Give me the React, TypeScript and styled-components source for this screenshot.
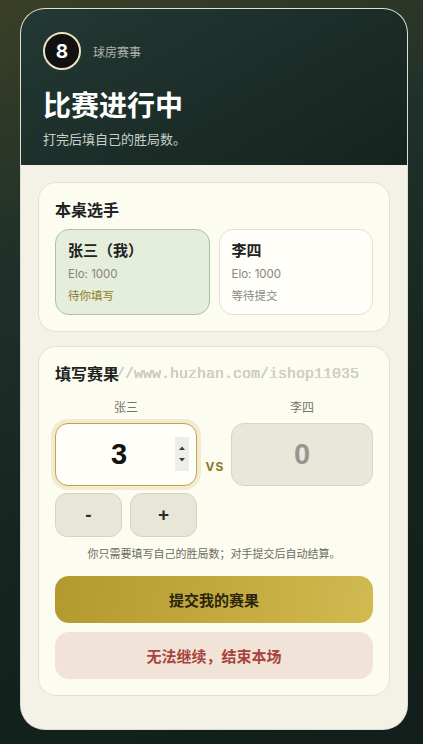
import { FC } from 'react';
import styled, { createGlobalStyle } from 'styled-components';

const GlobalStyle = createGlobalStyle`
    * { box-sizing: border-box; }
    html, body {
        margin: 0;
        padding: 0;
        min-height: 100%;
    }
    body {
        font-family: "Inter", "Noto Sans CJK SC", sans-serif;
        background: linear-gradient(160deg, #3b3f26 0%, #1f302a 30%, #16251f 60%, #111e1b 100%);
        min-height: 744px;
    }
`;

const players = [
    { name: '张三（我）', elo: 1000, status: '待你填写', mine: true },
    { name: '李四', elo: 1000, status: '等待提交', mine: false },
];

const App: FC = () => {
    return (
        <>
            <GlobalStyle />
            <Page>
                <Shell>
                    <Header>
                        <Brand>
                            <Badge>8</Badge>
                            <BrandName>球房赛事</BrandName>
                        </Brand>
                        <Title>比赛进行中</Title>
                        <Subtitle>打完后填自己的胜局数。</Subtitle>
                    </Header>

                    <Body>
                        <Section>
                            <SectionTitle>本桌选手</SectionTitle>
                            <PlayerGrid>
                                {players.map((p) => (
                                    <PlayerCard key={p.name} $mine={p.mine}>
                                        <PlayerName>{p.name}</PlayerName>
                                        <PlayerMeta>Elo: {p.elo}</PlayerMeta>
                                        <PlayerStatus $mine={p.mine}>{p.status}</PlayerStatus>
                                    </PlayerCard>
                                ))}
                            </PlayerGrid>
                        </Section>

                        <Section>
                            <SectionTitle>
                                填写赛果
                                <Watermark>//www.huzhan.com/ishop11035</Watermark>
                            </SectionTitle>
                            <ScoreGrid>
                                <ScoreCol>
                                    <ScoreLabel>张三</ScoreLabel>
                                    <ScoreInput>
                                        <ScoreValue>3</ScoreValue>
                                        <Spinner>
                                            <svg width="14" height="34" viewBox="0 0 14 34">
                                                <path d="M4 13 L7 9.5 L10 13 Z" fill="#3c3c3c" />
                                                <path d="M4 21 L7 24.5 L10 21 Z" fill="#3c3c3c" />
                                            </svg>
                                        </Spinner>
                                    </ScoreInput>
                                    <StepRow>
                                        <StepButton>-</StepButton>
                                        <StepButton>+</StepButton>
                                    </StepRow>
                                </ScoreCol>
                                <Versus>VS</Versus>
                                <ScoreCol>
                                    <ScoreLabel>李四</ScoreLabel>
                                    <ScoreBox>0</ScoreBox>
                                </ScoreCol>
                            </ScoreGrid>
                            <Hint>你只需要填写自己的胜局数；对手提交后自动结算。</Hint>
                            <SubmitButton>提交我的赛果</SubmitButton>
                            <EndButton>无法继续，结束本场</EndButton>
                        </Section>
                    </Body>
                </Shell>
            </Page>
        </>
    );
};

export default App;

const Page = styled.div`
    padding: 9px 16px 15px 21px;
`;

const Shell = styled.div`
    width: 386px;
    border-radius: 24px;
    overflow: hidden;
    background: #f4f2e6;
    box-shadow: 0 0 0 1px rgba(244, 242, 230, 0.9);
`;

const Header = styled.div`
    padding: 23px 22px 17px;
    background: linear-gradient(150deg, #233934 0%, #1c2e29 50%, #15231f 100%);
`;

const Brand = styled.div`
    display: flex;
    align-items: center;
    gap: 12px;
`;

const Badge = styled.div`
    width: 38px;
    height: 38px;
    border-radius: 50%;
    background: #111;
    border: 2px solid #ece3c3;
    color: #fff;
    font-family: "Inter", sans-serif;
    font-weight: 700;
    font-size: 19px;
    display: flex;
    align-items: center;
    justify-content: center;
`;

const BrandName = styled.div`
    font-size: 12px;
    color: #aeb6b0;
`;

const Title = styled.h1`
    margin: 18px 0 0;
    font-size: 28px;
    line-height: 36px;
    font-weight: 700;
    color: #fff;
`;

const Subtitle = styled.p`
    margin: 6px 0 0;
    font-size: 13px;
    line-height: 18px;
    color: #c9d0ca;
`;

const Body = styled.div`
    display: flex;
    flex-direction: column;
    gap: 14px;
    padding: 17px 17px 33px;
`;

const Section = styled.div`
    background: #fdfcf1;
    border: 1px solid #e4e1d2;
    border-radius: 18px;
    padding: 16px;
    display: flex;
    flex-direction: column;
`;

const SectionTitle = styled.div`
    position: relative;
    font-size: 16px;
    line-height: 22px;
    font-weight: 700;
    color: #222;
`;

const Watermark = styled.span`
    position: absolute;
    left: 61px;
    top: 1px;
    font-family: "Liberation Mono", monospace;
    font-size: 15px;
    font-weight: 400;
    color: #d6d4ca;
    text-shadow: 0 0 0.5px #9a988f;
    white-space: nowrap;
    pointer-events: none;
`;

const PlayerGrid = styled.div`
    margin-top: 8px;
    display: grid;
    grid-template-columns: 1fr 1fr;
    gap: 9px;
`;

const PlayerCard = styled.div<{ $mine: boolean }>`
    height: 86px;
    padding: 11px 12px;
    border-radius: 14px;
    border: 1px solid ${(p) => (p.$mine ? '#a9c59d' : '#e4e1d2')};
    background: ${(p) => (p.$mine ? '#e5eddb' : '#fffef9')};
`;

const PlayerName = styled.div`
    font-size: 15px;
    line-height: 20px;
    font-weight: 700;
    color: #222;
`;

const PlayerMeta = styled.div`
    margin-top: 5px;
    font-size: 11.5px;
    line-height: 16px;
    color: #858580;
`;

const PlayerStatus = styled.div<{ $mine: boolean }>`
    margin-top: 6px;
    font-size: 11.5px;
    line-height: 16px;
    color: ${(p) => (p.$mine ? '#8c7a25' : '#8a8a85')};
`;

const ScoreGrid = styled.div`
    margin-top: 15px;
    display: grid;
    grid-template-columns: 142px 1fr 142px;
    align-items: start;
`;

const ScoreCol = styled.div`
    display: flex;
    flex-direction: column;
`;

const ScoreLabel = styled.div`
    text-align: center;
    font-size: 12px;
    line-height: 16px;
    color: #75756d;
`;

const ScoreInput = styled.div`
    position: relative;
    margin-top: 7px;
    height: 63px;
    border-radius: 13px;
    border: 1.5px solid #c2a53c;
    background: #fffef9;
    box-shadow: 0 0 0 4px #f0ebd2;
    display: flex;
    align-items: center;
    justify-content: center;
    padding-right: 14px;
`;

const ScoreValue = styled.span`
    font-family: "Liberation Sans", Arial, sans-serif;
    font-size: 29px;
    font-weight: 700;
    color: #111;
`;

const Spinner = styled.div`
    position: absolute;
    right: 7px;
    top: 13px;
    width: 14px;
    height: 34px;
    background: #ededec;
    display: flex;
`;

const Versus = styled.div`
    margin-top: 59px;
    text-align: center;
    font-size: 12px;
    line-height: 16px;
    font-weight: 700;
    letter-spacing: 1px;
    color: #8c7a22;
    padding-left: 2px;
`;

const ScoreBox = styled.div`
    margin-top: 7px;
    height: 63px;
    border-radius: 13px;
    border: 1px solid #d8d5c4;
    background: #e9e7da;
    display: flex;
    align-items: center;
    justify-content: center;
    font-family: "Liberation Sans", Arial, sans-serif;
    font-size: 29px;
    font-weight: 700;
    color: #979790;
`;

const StepRow = styled.div`
    margin-top: 7px;
    display: grid;
    grid-template-columns: 1fr 1fr;
    gap: 8px;
`;

const StepButton = styled.button`
    height: 44px;
    border-radius: 12px;
    border: 1px solid #d6d3c1;
    background: #e8e6d6;
    font-family: "Liberation Sans", Arial, sans-serif;
    font-size: 19px;
    font-weight: 700;
    color: #2b2b2b;
    cursor: pointer;
`;

const Hint = styled.div`
    margin-top: 9px;
    text-align: center;
    font-size: 11px;
    line-height: 16px;
    color: #6b6b62;
`;

const SubmitButton = styled.button`
    margin-top: 14px;
    height: 47px;
    border: none;
    border-radius: 14px;
    background: linear-gradient(100deg, #b39a2e 0%, #c2a93d 50%, #d1ba50 100%);
    font-family: "Inter", "Noto Sans CJK SC", sans-serif;
    font-size: 15px;
    font-weight: 700;
    color: #2a2410;
    cursor: pointer;
`;

const EndButton = styled.button`
    margin-top: 9px;
    height: 47px;
    border: none;
    border-radius: 14px;
    background: #f2e3d8;
    font-family: "Inter", "Noto Sans CJK SC", sans-serif;
    font-size: 15px;
    font-weight: 700;
    color: #a6443c;
    cursor: pointer;
`;
